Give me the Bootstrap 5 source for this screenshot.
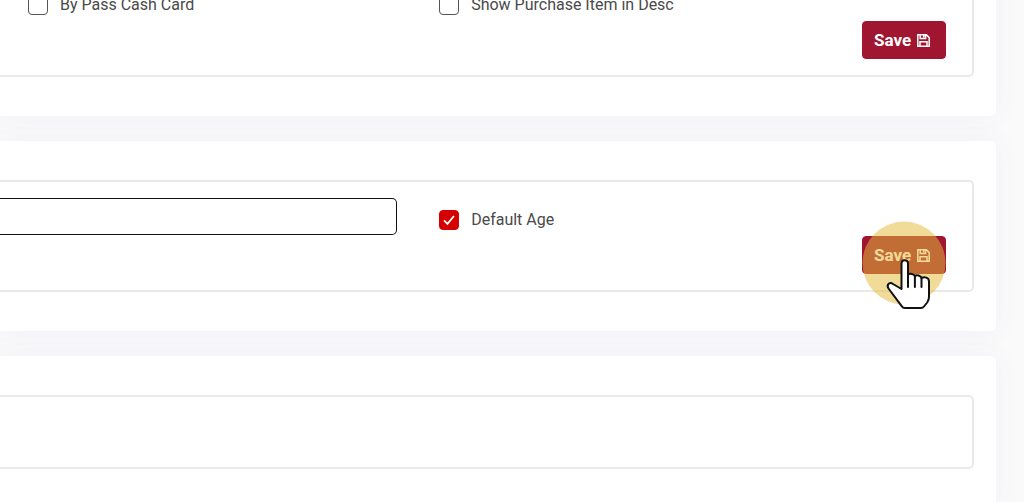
<!DOCTYPE html>
<html lang="en">
<head>
<meta charset="utf-8">
<meta name="viewport" content="width=device-width, initial-scale=1">
<title>Settings</title>
<link href="https://cdn.jsdelivr.net/npm/bootstrap@5.3.0/dist/css/bootstrap.min.css" rel="stylesheet">
<style>
  body { background: #fafafa; color: #4a4a4a; font-family: Roboto, sans-serif; font-size: 16px; line-height: 20px; }
  /* the settings page, scrolled part-way down */
  .viewport { height: 100vh; }
  .settings { margin-top: -74px; margin-right: 28px; gap: 25px; }
  .panel { padding: 39px 22px 39px 0; border-radius: 0 5px 5px 0; box-shadow: 0 0 28px rgba(82, 63, 225, .06); }
  .group { border: 2px solid #e9e9ea; border-left: 0; border-radius: 0 5px 5px 0; padding: 16px 0; min-height: 74px; }
  .fields { display: grid; grid-template-columns: 42.3% 1fr; height: 38px; }
  .option { padding: 12px 0 0 28px; gap: 12px; }
  .option .form-check-input { width: 20px; height: 20px; margin: 0; border: 1px solid #555; border-radius: 4px; }
  .option .form-check-input:checked { background-color: #d50000; border-color: #d50000; background-image: url("data:image/svg+xml,%3Csvg xmlns='http://www.w3.org/2000/svg' viewBox='0 0 20 20'%3E%3Cpath d='M4.500 10.500l3.800 3.800L15.500 5.500' fill='none' stroke='%23fff' stroke-width='2'/%3E%3C/svg%3E"); }
  .field { padding-right: 14px; }
  .field .form-control { height: 37px; border: 1px solid #111; border-left: 0; border-radius: 0 5px 5px 0; }
  .actions { padding-right: 26px; }
  .btn-save { --bs-btn-bg: #a0152f; --bs-btn-border-color: #a0152f; --bs-btn-color: #fff; --bs-btn-hover-bg: #8a1028; --bs-btn-hover-color: #fff; width: 84px; height: 38px; padding: 0 0 0 11px; border-radius: 4px; font-size: 17px; font-weight: 700; line-height: 20px; gap: 6px; }
  .pointer { top: -15px; left: 0; pointer-events: none; }
</style>
</head>
<body>
<div class="viewport overflow-hidden d-flow-root">
  <main class="settings d-flex flex-column">
    <section class="panel bg-white">
      <div class="group">
        <div class="fields">
          <div class="option d-flex align-items-start">
            <input class="form-check-input" type="checkbox" id="bypass">
            <label for="bypass">By Pass Cash Card</label>
          </div>
          <div class="option d-flex align-items-start">
            <input class="form-check-input" type="checkbox" id="showItem">
            <label for="showItem">Show Purchase Item in Desc</label>
          </div>
        </div>
        <div class="actions d-flex justify-content-end">
          <button type="button" class="btn btn-save d-flex align-items-center">Save
            <svg width="13" height="13" viewBox="0 0 13 13" fill="none" stroke="currentColor" stroke-width="1.5" aria-hidden="true"><path d="M.8.8h8.6l2.8 2.8v8.6H.8zM3.2.8v3.6h5.4V.8M3 12.2V7.8h7v4.400M6.7 1v2.4"/></svg>
          </button>
        </div>
      </div>
    </section>

    <section class="panel bg-white">
      <div class="group">
        <div class="fields">
          <div class="field"><input class="form-control" type="text" aria-label="Age"></div>
          <div class="option d-flex align-items-start">
            <input class="form-check-input" type="checkbox" id="defaultAge" checked>
            <label for="defaultAge">Default Age</label>
          </div>
        </div>
        <div class="actions d-flex justify-content-end">
          <div class="position-relative">
            <button type="button" class="btn btn-save d-flex align-items-center">Save
              <svg width="13" height="13" viewBox="0 0 13 13" fill="none" stroke="currentColor" stroke-width="1.5" aria-hidden="true"><path d="M.8.8h8.6l2.8 2.8v8.6H.8zM3.2.8v3.6h5.4V.8M3 12.2V7.8h7v4.400M6.7 1v2.4"/></svg>
            </button>
            <!-- click highlight and hand cursor -->
            <svg class="pointer position-absolute" width="84" height="92" viewBox="0 0 84 92" aria-hidden="true">
              <circle cx="42" cy="42" r="41.5" fill="#e2bd3c" fill-opacity=".53"/>
              <path d="M39.500 68V42.500c0-4.400 6.500-4.400 6.500 0V53.500c2-1.500 6-.5 6.900 1.500 2-1.500 5.700-.5 6.600 2 3-1.500 7.500-.5 7.500 3.500V76c0 2.500-.8 4-1.800 5.500L62 85.500c-.8 1-1.500 1.500-3 1.500H43c-1.500 0-2.500-.5-3.300-1.800L26.500 67.500c-2.500-4 1.500-7 4.500-4.500z" fill="#fff" stroke="#111" stroke-width="2" stroke-linejoin="round"/>
              <path d="M46 52v14M52.900 55v11M59.500 57v9" stroke="#111" stroke-width="2" stroke-linecap="round"/>
            </svg>
          </div>
        </div>
      </div>
    </section>

    <section class="panel bg-white">
      <div class="group"></div>
    </section>
  </main>
</div>
<script src="https://cdn.jsdelivr.net/npm/bootstrap@5.3.0/dist/js/bootstrap.bundle.min.js"></script>
</body>
</html>
